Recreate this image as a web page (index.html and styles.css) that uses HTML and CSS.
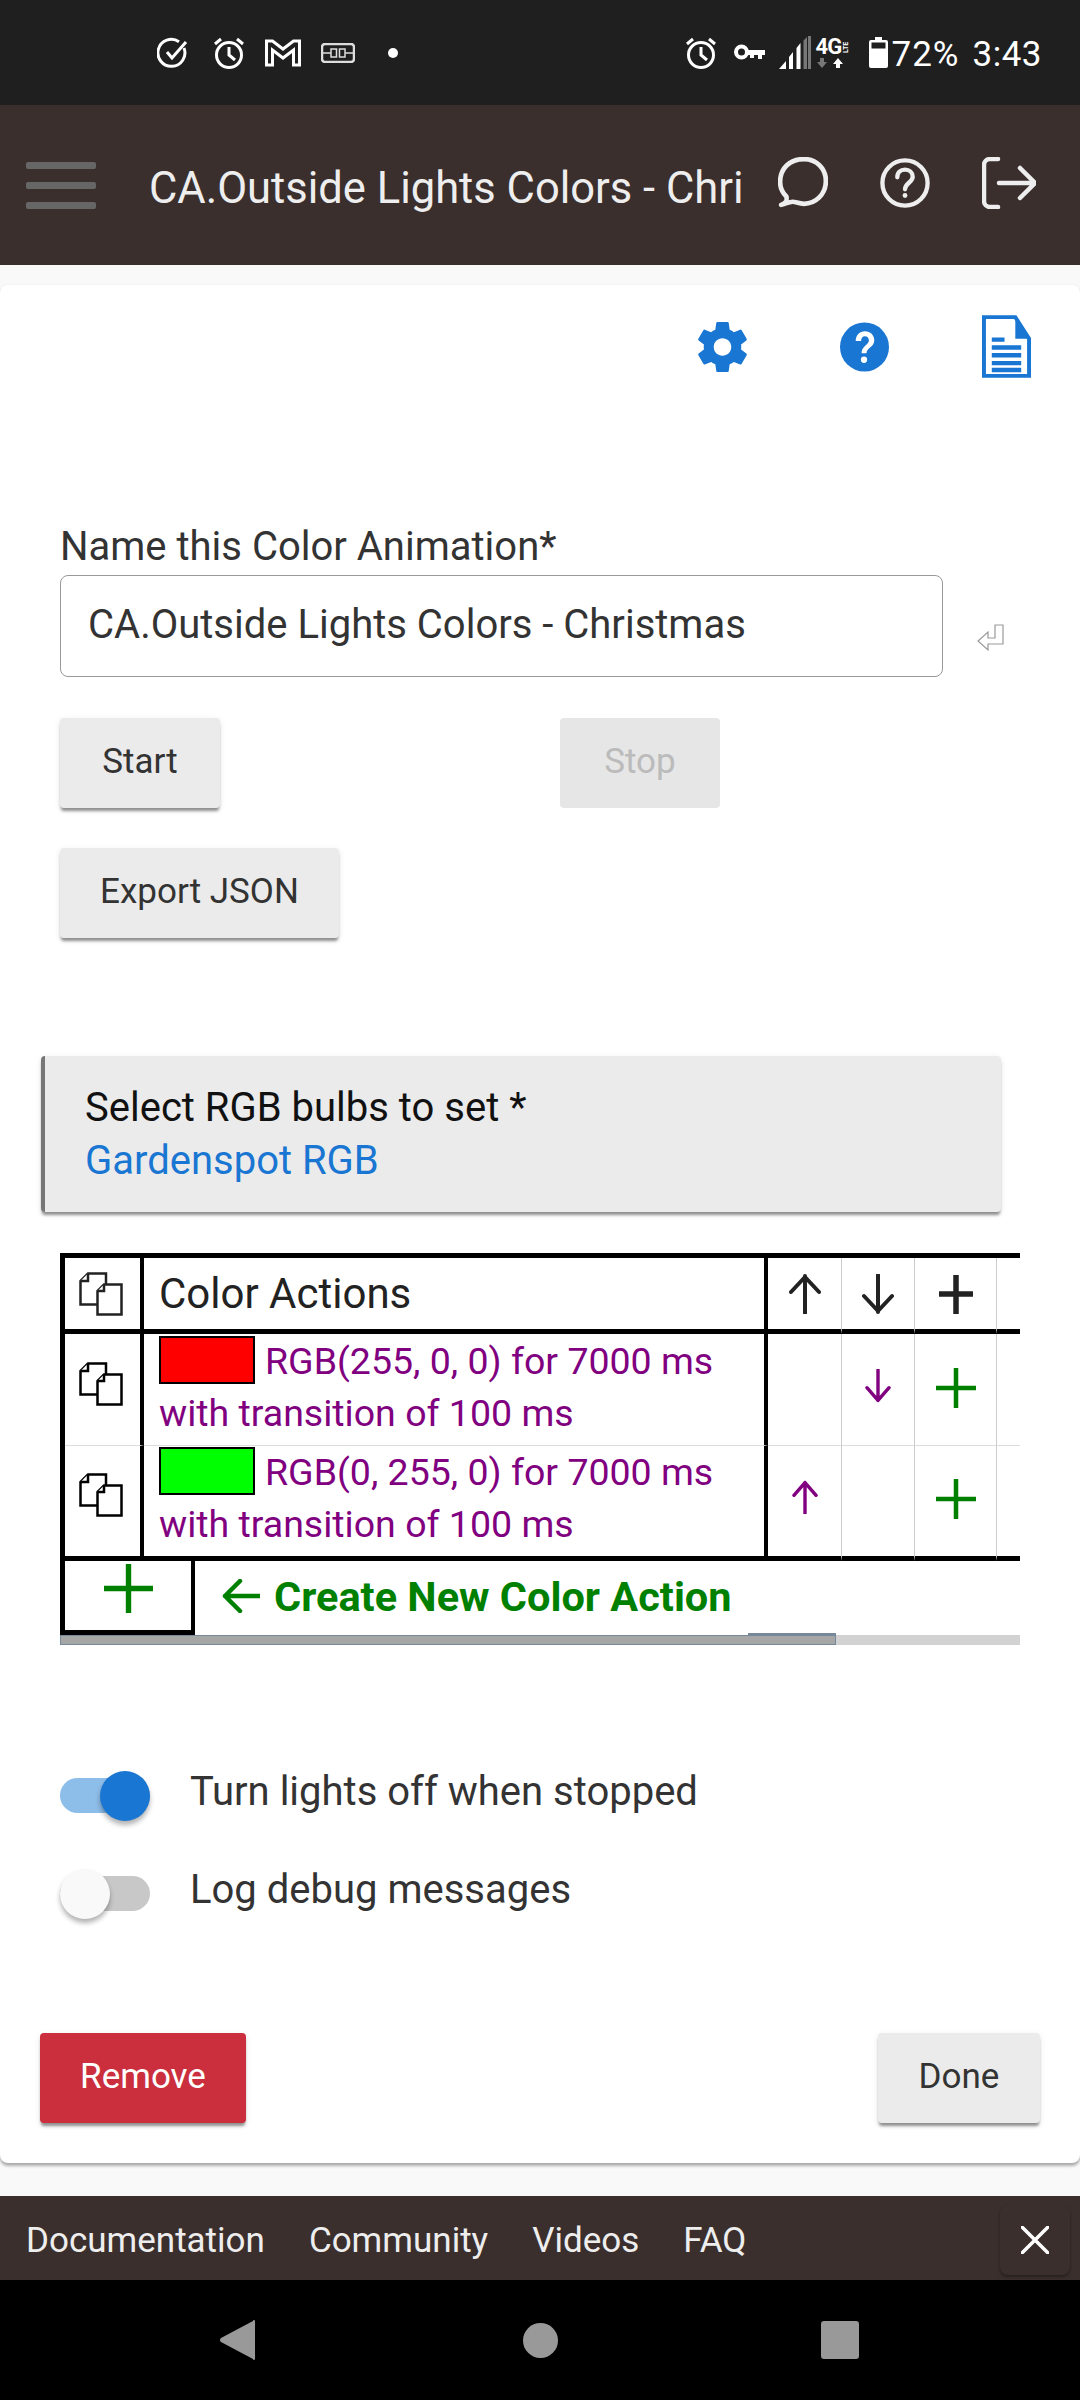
FILE: index.html
```html
<!DOCTYPE html>
<html lang="en">
<head>
<meta charset="utf-8">
<title>CA.Outside Lights Colors</title>
<link rel="stylesheet" href="styles.css">
</head>
<body>
<div class="status">
  <div class="status-left">
    <svg class="si check" viewBox="0 0 32 32"><path d="M27 11a13.5 13.5 0 1 1-5-6.300" class="w3"/><path d="M10 15l5 6L29 5" class="w3"/></svg>
    <svg class="si alarm" viewBox="0 0 32 32"><circle cx="16" cy="18" r="12.500" class="w3"/><path d="M16 10v8l6 5M2 7l6-5M30 7l-6-5" class="w3"/></svg>
    <svg class="si gm" viewBox="0 0 36 28"><path d="M1.500 2h6L18 10 28.500 2h6v24h-6V11L18 19 7.500 11v15h-6z" class="w3"/></svg>
    <svg class="si plug" viewBox="0 0 34 20"><rect x="1" y="1" width="32" height="18" rx="3" class="w2"/><path d="M1 10h9M24 10h9M10 6h5.500v8H10zM24 6h-5.500v8H24z" class="w1"/></svg>
    <span class="dot"></span>
  </div>
  <div class="status-right">
    <svg class="si alarm2" viewBox="0 0 32 32"><circle cx="16" cy="18" r="12.500" class="w3"/><path d="M16 10v8l6 5M2 7l6-5M30 7l-6-5" class="w3"/></svg>
    <svg class="si key" viewBox="0 0 32 17"><circle cx="7.500" cy="8" r="5.500" class="w4"/><path d="M13 6h18v5h-3v4h-4v-4h-4v3h-4v-3h-3z" fill="#fff"/></svg>
    <svg class="si signal" viewBox="0 0 32 33"><path d="M0 33l7-8v8zM10 33V21l4-5v17zM17.500 33V12l4-5v26z" fill="#fff"/><path d="M24.500 33V4.500L28 1v32zM29 33V0l3-0v33z" fill="#777"/></svg>
    <div class="net">
      <div class="net-top"><span class="fourg">4G</span><span class="lte">LTE</span></div>
      <svg class="arrows" viewBox="0 0 32 10"><path d="M4 0h4v4h3l-5 6-5-6h3z" fill="#777"/><path d="M22 0l5 6h-3v4h-4V6h-3z" fill="#fff"/></svg>
    </div>
    <svg class="si batt" viewBox="0 0 19 31"><path d="M6 0h7v3h4a2 2 0 0 1 2 2v24a2 2 0 0 1-2 2H2a2 2 0 0 1-2-2V5a2 2 0 0 1 2-2h4z" fill="#fff"/><rect x="2.500" y="5.500" width="14" height="6" fill="#1f1f1f"/></svg>
    <span class="pct">72%</span>
    <span class="clock">3:43</span>
  </div>
</div>

<header class="appbar">
  <div class="burger"><span></span><span></span><span></span></div>
  <div class="apptitle">CA.Outside Lights Colors - Chri</div>
  <div class="appicons">
    <svg class="ai" viewBox="0 0 48 50"><path d="M3 46C8 44 9 42 8 38 4 34 2 29 2 24 2 11 11 2 25 2c12 0 21 9 21 21 0 13-10 22-21 22-5 0-8-2-11-2-3 0-7 2-11 3z" class="bar"/></svg>
    <svg class="ai" viewBox="0 0 52 52"><circle cx="26" cy="26" r="23.500" class="bar"/><path d="M18 20c0-5 3.500-8 8-8s8 3 8 7.500c0 6-8 6.500-8 13" class="bar"/><circle cx="26" cy="39" r="2.500" fill="#eee"/></svg>
    <svg class="ai wide" viewBox="0 0 54 52"><path d="M16 2H8a6 6 0 0 0-6 6v36a6 6 0 0 0 6 6h8M17 26h35M38 11l15 15-15 15" class="bar"/></svg>
  </div>
</header>

<main class="page">
  <section class="card">
    <div class="tools">
      <svg class="tool" viewBox="2.200 2 19.600 20"><path fill="#1976d2" d="M19.430 12.980c.04-.32.070-.64.070-.98s-.03-.66-.07-.98l2.110-1.650c.19-.15.240-.42.120-.64l-2-3.460c-.12-.22-.39-.3-.61-.22l-2.490 1c-.52-.4-1.080-.73-1.690-.98l-.38-2.650C14.460 2.180 14.250 2 14 2h-4c-.25 0-.46.180-.49.420l-.38 2.650c-.61.25-1.170.59-1.690.98l-2.490-1c-.23-.09-.49 0-.61.220l-2 3.460c-.13.220-.07.49.12.64l2.110 1.650c-.04.320-.07.650-.07.980s.03.660.07.980l-2.110 1.650c-.19.150-.24.420-.12.640l2 3.460c.12.220.39.300.61.220l2.490-1c.52.400 1.080.730 1.690.980l.38 2.650c.03.240.24.420.49.420h4c.25 0 .46-.180.49-.420l.38-2.650c.61-.25 1.170-.59 1.690-.98l2.490 1c.23.090.49 0 .61-.220l2-3.460c.12-.22.070-.49-.12-.64l-2.110-1.650zM12 15.500c-1.930 0-3.500-1.570-3.500-3.500s1.570-3.500 3.500-3.500 3.500 1.570 3.500 3.500-1.570 3.500-3.500 3.500z"/></svg>
      <svg class="tool" viewBox="0 0 50 50"><circle cx="25" cy="25" r="25" fill="#1976d2"/><path d="M16 19c0-6 4-10 9.500-10S35 13 35 18c0 7-8 7.500-8 13.500h-5c0-8 7.500-8.500 7.500-13.500 0-2-1.500-4-4-4s-4 2-4 5z" fill="#fff"/><circle cx="24.500" cy="38" r="3.200" fill="#fff"/></svg>
      <svg class="tool doc" viewBox="0 0 50 64"><path d="M2 2h32l14 22v38H2z" fill="#fff" stroke="#1976d2" stroke-width="4"/><path d="M34 2v22h14z" fill="#1976d2"/><path d="M10 25h13M10 33h30M10 41h30M10 49h30M10 56h30" stroke="#1976d2" stroke-width="4.500" fill="none"/></svg>
    </div>

    <label class="field-label">Name this Color Animation*</label>
    <div class="field-row">
      <div class="field">CA.Outside Lights Colors - Christmas</div>
      <svg class="enter" viewBox="0 0 28 28"><path d="M18 1h8v19H11v6L1 17l10-9v6h7z" fill="#fff" stroke="#999" stroke-width="1.200"/></svg>
    </div>

    <div class="btn-row">
      <button class="btn start">Start</button>
      <button class="btn stop">Stop</button>
    </div>
    <button class="btn export">Export JSON</button>

    <div class="select-card">
      <div class="select-title">Select RGB bulbs to set *</div>
      <div class="select-value">Gardenspot RGB</div>
    </div>

    <div class="table-wrap">
      <table class="actions">
        <colgroup><col class="c1"><col class="c2"><col class="c3"><col class="c4"><col class="c5"><col class="c6"></colgroup>
        <tr class="head">
          <td class="thick-r"><svg class="copy dim" viewBox="0 0 44 44"><use href="#copy"/></svg></td>
          <td class="thick-r title-cell">Color Actions</td>
          <td class="thin-r"><svg class="arr" viewBox="0 0 32 40"><path d="M16 39V2M2 18L16 3l14 15" class="sk-b"/></svg></td>
          <td class="thin-r"><svg class="arr" viewBox="0 0 32 40"><path d="M16 1v37M2 22l14 15 14-15" class="sk-b"/></svg></td>
          <td class="thin-r"><svg class="plus-h" viewBox="0 0 36 40"><path d="M18 1v39M1 20h34" class="sk-bb"/></svg></td>
          <td></td>
        </tr>
        <tr class="row thin-b">
          <td class="thick-r"><svg class="copy" viewBox="0 0 44 44"><use href="#copy"/></svg></td>
          <td class="thick-r desc"><span class="swatch red"></span>RGB(255, 0, 0) for 7000 ms<br>with transition of 100 ms</td>
          <td class="thin-r"></td>
          <td class="thin-r"><svg class="arr small" viewBox="0 0 32 40"><path d="M16 1v36M3 22l13 15 13-15" class="sk-p"/></svg></td>
          <td class="thin-r"><svg class="plus" viewBox="0 0 40 40"><path d="M20 0v40M0 20h40" class="sk-g"/></svg></td>
          <td></td>
        </tr>
        <tr class="row last">
          <td class="thick-r"><svg class="copy" viewBox="0 0 44 44"><use href="#copy"/></svg></td>
          <td class="thick-r desc"><span class="swatch green"></span>RGB(0, 255, 0) for 7000 ms<br>with transition of 100 ms</td>
          <td class="thin-r"><svg class="arr small" viewBox="0 0 32 40"><path d="M16 39V3M3 18L16 3l13 15" class="sk-p"/></svg></td>
          <td class="thin-r"></td>
          <td class="thin-r"><svg class="plus" viewBox="0 0 40 40"><path d="M20 0v40M0 20h40" class="sk-g"/></svg></td>
          <td></td>
        </tr>
      </table>
      <div class="addrow">
        <div class="addbox"><svg class="plus-big" viewBox="0 0 50 50"><path d="M25 0v50M0 25h50" class="sk-gb"/></svg></div>
        <svg class="larr" viewBox="0 0 38 34"><path d="M38 17H3M18 2L3 17l15 15" class="sk-gm"/></svg>
        <span class="addtext">Create New Color Action</span>
      </div>
      <div class="scroll"><div class="thumb"></div></div>
    </div>

    <div class="toggle-row first">
      <span class="switch on"><span class="knob"></span></span>
      <span class="toggle-label">Turn lights off when stopped</span>
    </div>
    <div class="toggle-row">
      <span class="switch off"><span class="knob"></span></span>
      <span class="toggle-label">Log debug messages</span>
    </div>

    <div class="card-actions">
      <button class="btn remove">Remove</button>
      <button class="btn done">Done</button>
    </div>
  </section>
</main>

<footer class="foot">
  <nav class="links"><a>Documentation</a><a>Community</a><a>Videos</a><a>FAQ</a></nav>
  <div class="close"><svg viewBox="0 0 28 28"><path d="M1 1l26 26M27 1L1 27" class="sk-w"/></svg></div>
</footer>

<div class="navbar">
  <svg class="nb tri" viewBox="0 0 36 40"><path d="M35 1v38a1 1 0 0 1-2 0L1 22a2.500 2.500 0 0 1 0-4L33 1a1 1 0 0 1 2 0z" fill="#999"/></svg>
  <span class="nb circ"></span>
  <span class="nb sq"></span>
</div>

<svg class="defs" width="0" height="0"><defs><g id="copy" fill="#fff" stroke="currentColor" stroke-width="2.500"><path d="M9 1.500h18v31H1.500V9z"/><path d="M9 1.500V9H1.500"/><path d="M25 12.500h17.500v30h-24V19z"/><path d="M25 12.500V19h-6.500"/></g></defs></svg>
</body>
</html>
```
FILE: styles.css
```css
* { box-sizing: border-box; }
html, body { margin: 0; padding: 0; }
body {
  width: 1080px;
  height: 2400px;
  overflow: hidden;
  display: flex;
  flex-direction: column;
  background: #f9f9f9;
  font-family: Roboto, "Noto Sans", sans-serif;
  color: #333;
  font-size: 40px;
}
.defs { position: absolute; }

/* status bar */
.status {
  height: 105px;
  flex: none;
  background: #1f1f1f;
  display: flex;
  justify-content: space-between;
  align-items: center;
  padding: 0 38px 0 157px;
  color: #fff;
}
.status-left, .status-right { display: flex; align-items: center; }
.w1, .w2, .w3, .w4 { fill: none; stroke: #fff; }
.w1 { stroke-width: 1.500; stroke: #ddd; }
.w2 { stroke-width: 2.500; stroke: #ddd; }
.w3 { stroke-width: 3; }
.w4 { stroke-width: 4; }
.si { display: block; flex: none; }
.check { width: 32px; height: 32px; }
.alarm { width: 32px; height: 32px; margin-left: 24px; }
.gm { width: 36px; height: 28px; margin-left: 20px; }
.plug { width: 34px; height: 20px; margin-left: 20px; }
.dot { width: 10px; height: 10px; border-radius: 50%; background: #fff; margin-left: 33px; }
.alarm2 { width: 32px; height: 32px; }
.key { width: 32px; height: 17px; margin-left: 17px; }
.signal { width: 32px; height: 33px; margin-left: 13px; }
.net { width: 32px; margin-left: 5px; display: flex; flex-direction: column; }
.net-top { display: flex; align-items: flex-start; height: 20px; }
.fourg { font-size: 22px; font-weight: 700; line-height: 20px; letter-spacing: -1px; }
.lte { font-size: 7px; font-weight: 700; line-height: 8px; writing-mode: vertical-rl; transform: rotate(180deg); height: 20px; margin-left: 1px; text-align: center; }
.arrows { width: 32px; height: 10px; margin-top: 1px; display: block; }
.batt { width: 19px; height: 31px; margin-left: 21px; }
.pct { font-size: 35px; margin-left: 4px; letter-spacing: 1px; line-height: 40px; margin-top: 5px; }
.clock { font-size: 35px; margin-left: 13px; letter-spacing: .5px; line-height: 40px; margin-top: 5px; }

/* app bar */
.appbar {
  height: 160px;
  flex: none;
  background: #3a2f2d;
  display: flex;
  align-items: center;
  padding-left: 26px;
}
.burger { width: 70px; flex: none; display: flex; flex-direction: column; gap: 13px; margin-right: 54px; }
.burger span { height: 7px; border-radius: 2px; background: #666; }
.apptitle {
  width: 595px;
  flex: none;
  white-space: nowrap;
  color: #eee;
  font-size: 43.500px;
  line-height: 50px;
  margin-top: 8px;
  margin-left: -1px;
  margin-right: 1px;
}
.appicons { display: flex; align-items: center; margin-left: 33px; margin-top: -5px; }
.ai { width: 50px; height: 52px; display: block; margin-right: 52px; flex: none; }
.ai.wide { width: 54px; margin-right: 0; }
.bar { fill: none; stroke: #eee; stroke-width: 4.500; stroke-linecap: round; stroke-linejoin: round; }

/* page */
.page { flex: 1; padding-top: 20px; min-height: 0; }
.card {
  height: 1878px;
  background: #fff;
  border-radius: 8px;
  box-shadow: 0 3px 3px rgba(0,0,0,.3), 0 0 3px rgba(0,0,0,.06);
  padding: 0 40px;
  display: flow-root;
}
.tools { display: flex; justify-content: flex-end; align-items: center; height: 63px; margin-top: 30px; padding-right: 9px; gap: 93px; }
.tool { width: 49px; height: 50px; display: block; }
.tool.doc { height: 63px; }
.field-label { display: block; margin: 147px 0 0 20px; line-height: 44px; height: 44px; }
.field-row { display: flex; align-items: center; margin: 6px 0 0 20px; }
.field {
  width: 883px;
  height: 102px;
  border: 1.500px solid #999;
  border-radius: 8px;
  padding: 0 27px;
  line-height: 98px;
  white-space: nowrap;
}
.enter { width: 28px; height: 28px; margin: 24px 0 0 34px; }
.btn {
  display: block;
  height: 90px;
  border: 0;
  border-radius: 4px;
  padding: 0 0 3px;
  font: inherit;
  font-size: 35px;
  color: #333;
  background: #ebebeb;
  box-shadow: 0 4px 3px -1px rgba(0,0,0,.4), 0 2px 6px rgba(0,0,0,.1);
}
.btn-row { display: flex; margin: 41px 0 0 20px; }
.start { width: 160px; }
.stop { width: 160px; margin-left: 340px; background: #e6e6e6; color: #bbb; box-shadow: none; }
.export { width: 279px; margin: 40px 0 0 20px; }

.select-card {
  height: 156px;
  width: 960px;
  margin: 118px 0 0 1px;
  background: #ebebeb;
  border-left: 4px solid #777;
  border-radius: 4px;
  padding: 25px 0 0 40px;
  color: #111;
  line-height: 53px;
  box-shadow: 0 4px 3px -1px rgba(0,0,0,.4), 0 2px 6px rgba(0,0,0,.1);
}
.select-value { color: #1976d2; }

.table-wrap { width: 960px; margin: 41px 0 0 20px; overflow: hidden; }
.actions { border-collapse: separate; border-spacing: 0; table-layout: fixed; width: 1040px; border-top: 5px solid #000; border-left: 5px solid #000; }
.actions td { padding: 0; text-align: center; vertical-align: middle; }
.c1 { width: 79px; }
.c2 { width: 624px; }
.c3 { width: 74px; }
.c4 { width: 73px; }
.c5 { width: 82px; }
.c6 { width: 103px; }
.thick-r { border-right: 4px solid #000; }
.thin-r { border-right: 1px solid #ccc; }
.head td { height: 76px; border-bottom: 5px solid #000; }
.row td { height: 112px; }
.thin-b td { border-bottom: 1px solid #ddd; }
.row.last td { height: 115px; border-bottom: 5px solid #000; }
.actions .title-cell { text-align: left; padding-left: 15px; font-size: 42px; color: #222; }
.actions .desc { text-align: left; padding: 0 0 6px 15px; color: #800080; font-size: 37.500px; line-height: 52px; white-space: nowrap; }
.swatch { display: inline-block; width: 96px; height: 48px; border: 2px solid #000; vertical-align: -10px; margin-right: 10px; }
.red { background: #f00; }
.green { background: #0f0; }
.copy { width: 44px; height: 44px; display: block; margin: 0 auto; color: #000; transform: translateX(-2px); }
.copy.dim { color: #222; }
.row .copy { margin-bottom: 12px; }
.arr { width: 32px; height: 40px; display: block; margin: 0 auto; }
.arr.small { width: 30px; height: 34px; margin-bottom: 8px; }
.plus-h { width: 36px; height: 40px; display: block; margin: 0 auto; }
.plus { width: 40px; height: 40px; display: block; margin: 0 auto 4px; }
.sk-b { fill: none; stroke: #222; stroke-width: 4; stroke-linecap: round; stroke-linejoin: round; }
.sk-bb { fill: none; stroke: #222; stroke-width: 5.500; }
.sk-p { fill: none; stroke: #800080; stroke-width: 4; stroke-linecap: round; stroke-linejoin: round; }
.sk-g { fill: none; stroke: #008000; stroke-width: 4.500; }
.sk-gb { fill: none; stroke: #008000; stroke-width: 5.500; }
.sk-gm { fill: none; stroke: #008000; stroke-width: 4.500; stroke-linejoin: round; stroke-linecap: round; }
.sk-w { fill: none; stroke: #fff; stroke-width: 3.500; stroke-linecap: round; }

.addrow { display: flex; align-items: center; height: 74px; }
.addbox { width: 135px; height: 74px; border: 5px solid #000; border-top: 0; border-right-width: 4px; display: flex; justify-content: center; align-items: center; padding-bottom: 14px; }
.plus-big { width: 49px; height: 49px; display: block; }
.larr { width: 38px; height: 34px; margin-left: 27px; flex: none; margin-top: -5px; }
.addtext { margin-left: 14px; font-size: 41.500px; font-weight: 700; color: #008000; white-space: nowrap; margin-top: -3px; }
.scroll { height: 10px; background: #d2d2d2; }
.thumb { position: relative; width: 776px; height: 10px; background: #a6a6a6; box-shadow: inset 0 0 0 1px #778899; }
.thumb::after { content: ""; position: absolute; right: 0; bottom: 100%; width: 88px; height: 2px; background: #778899; }

.toggle-row { display: flex; align-items: center; height: 50px; margin: 48px 0 0 20px; }
.toggle-row.first { margin-top: 125px; }
.switch { position: relative; width: 90px; height: 35px; border-radius: 18px; flex: none; display: block; }
.switch.on { background: #8dbde9; }
.switch.off { background: #c8c8c8; }
.knob { position: absolute; top: -7px; width: 50px; height: 50px; border-radius: 50%; box-shadow: 0 4px 5px rgba(0,0,0,.3); }
.on .knob { right: 0; background: #1976d2; }
.off .knob { left: 0; background: #f9f9f9; }
.toggle-label { margin-left: 40px; line-height: 50px; margin-top: -6px; }

.card-actions { display: flex; justify-content: space-between; margin-top: 115px; }
.remove { width: 206px; background: #cb2e3c; color: #fff; }
.done { width: 162px; }

/* footer */
.foot {
  height: 84px;
  flex: none;
  background: #3a2f2d;
  display: flex;
  justify-content: space-between;
  align-items: center;
  padding: 0 10px 0 26px;
}
.links { display: flex; gap: 44px; color: #eee; font-size: 35px; margin-top: 4px; }
.close {
  width: 70px;
  height: 70px;
  margin-top: 4px;
  border-radius: 8px;
  background: #3a2f2d;
  box-shadow: 0 2px 3px rgba(0,0,0,.35);
  display: flex;
  justify-content: center;
  align-items: center;
}
.close svg { width: 28px; height: 28px; display: block; }

/* nav */
.navbar { height: 120px; flex: none; background: #000; display: flex; align-items: center; padding-left: 220px; }
.tri { width: 36px; height: 40px; display: block; }
.circ { width: 35px; height: 35px; border-radius: 50%; background: #999; margin-left: 267px; }
.sq { width: 38px; height: 38px; border-radius: 3px; background: #999; margin-left: 263px; }
```
